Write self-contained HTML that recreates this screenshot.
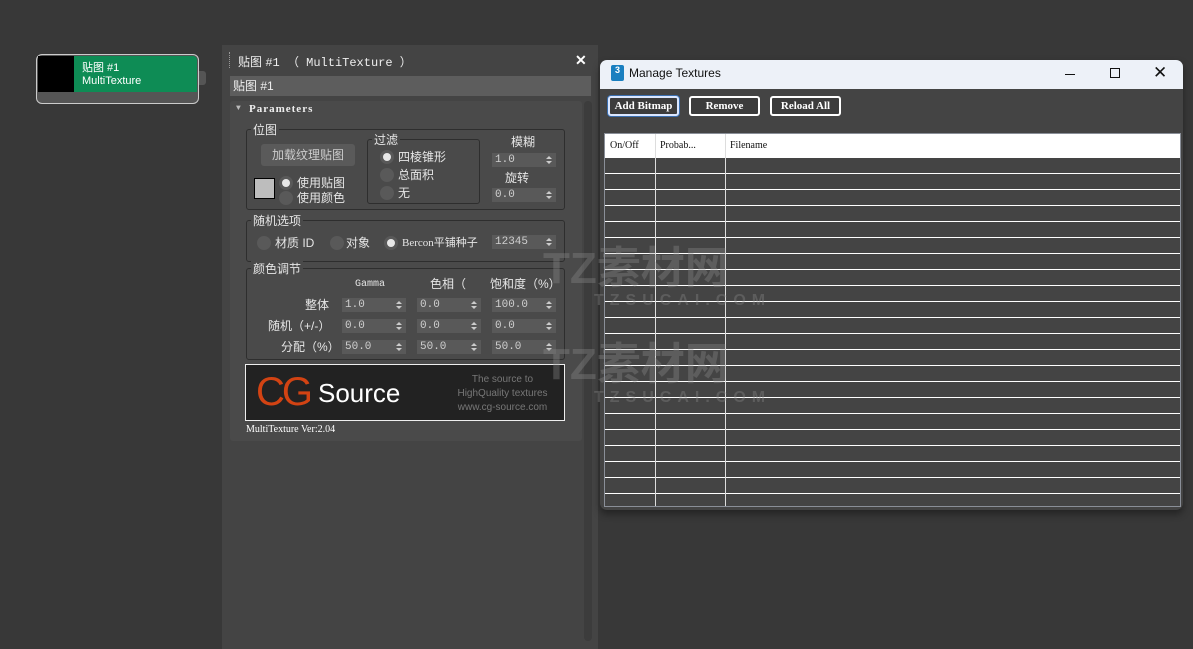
<!DOCTYPE html>
<html><head><meta charset="utf-8">
<style>
*{margin:0;padding:0;box-sizing:border-box}
body{width:1193px;height:649px;overflow:hidden;background:#383838;font-family:"Liberation Mono","Noto Sans CJK SC",monospace;color:#ddd;position:relative;font-size:11px}
.a{position:absolute}
.cj{font-family:"Liberation Sans","Noto Sans CJK SC",sans-serif}
.grp{position:absolute;border:1px solid #2e2e2e;border-radius:3px}
.gl{position:absolute;top:-9px;left:4px;background:#4a4a4a;padding:0 2px;font-size:12px;color:#e6e6e6;font-family:"Liberation Sans","Noto Sans CJK SC",sans-serif}
.sp{position:absolute;height:14px;width:64px;background:#595959;color:#cfcfcf;font-size:11px;line-height:14px;padding-left:3px}
.sp:after{content:"";position:absolute;right:4px;top:3px;border-left:3px solid transparent;border-right:3px solid transparent;border-bottom:3px solid #ccc}
.sp:before{content:"";position:absolute;right:4px;bottom:3px;border-left:3px solid transparent;border-right:3px solid transparent;border-top:3px solid #ccc}
.rd{position:absolute;width:14px;height:14px;border-radius:50%;background:#595959}
.rd.on:after{content:"";position:absolute;left:3px;top:3px;width:8px;height:8px;border-radius:50%;background:#e8e8e8}
.lb{position:absolute;font-size:12px;color:#e6e6e6;font-family:"Liberation Sans","Noto Sans CJK SC",sans-serif;line-height:14px;white-space:nowrap}
.btn{position:absolute;height:20px;border:2px solid #fff;border-radius:3px;background:#3c3c3c;color:#fff;font-size:11px;text-align:center;line-height:16px;font-family:"Liberation Serif",serif;font-weight:bold}
.wm{position:absolute;color:rgba(140,140,140,.35);font-family:"Liberation Sans","Noto Sans CJK SC",sans-serif;font-weight:bold;white-space:nowrap}
</style></head><body>

<!-- node -->
<div class="a" style="left:36px;top:54px;width:163px;height:50px;border:1px solid #ccc;border-radius:6px;background:#555"></div>
<div class="a" style="left:38px;top:56px;width:36px;height:36px;background:#000"></div>
<div class="a" style="left:74px;top:56px;width:123px;height:36px;background:#0e8c55;border-radius:0 4px 0 0"></div>
<div class="a cj" style="left:82px;top:59px;font-size:11px;color:#fff">贴图 #1</div>
<div class="a cj" style="left:82px;top:75px;font-size:11px;color:#fff">MultiTexture</div>
<div class="a" style="left:199px;top:71px;width:7px;height:14px;background:#555;border-radius:0 3px 3px 0"></div>

<!-- material panel -->
<div class="a" style="left:222px;top:45px;width:376px;height:604px;background:#444"></div>
<div class="a" style="left:229px;top:52px;width:2px;height:16px;border-left:1px dotted #999"></div>
<div class="a cj" style="left:238px;top:53px;font-size:12px;color:#eee">贴图 <span style="font-family:'Liberation Mono'">#1 （ MultiTexture ）</span></div>
<div class="a" style="left:575px;top:52px;font-size:14px;color:#fff;font-weight:bold;font-family:'Liberation Sans'">✕</div>
<div class="a cj" style="left:230px;top:76px;width:361px;height:20px;background:#5d5d5d;font-size:12px;color:#eee;line-height:20px;padding-left:3px">贴图 #1</div>
<div class="a" style="left:230px;top:101px;width:352px;height:340px;background:#4a4a4a;border-radius:3px"></div>
<div class="a" style="left:584px;top:101px;width:8px;height:540px;background:#3c3c3c;border-radius:4px"></div>
<div class="a" style="left:236px;top:104px;font-size:8px;color:#bbb">▼</div>
<div class="a" style="left:249px;top:103px;font-size:11px;font-weight:bold;color:#eee;font-family:'Liberation Serif';letter-spacing:1px">Parameters</div>

<div class="grp" style="left:246px;top:129px;width:319px;height:81px"><span class="gl">位图</span></div>
<div class="a cj" style="left:261px;top:144px;width:94px;height:22px;background:#5a5a5a;border-radius:3px;font-size:12px;color:#ccc;text-align:center;line-height:22px">加载纹理贴图</div>
<div class="a" style="left:254px;top:178px;width:21px;height:21px;background:#bdbdbd;border:1px solid #000"></div>
<div class="rd on" style="left:279px;top:176px"></div><div class="lb" style="left:297px;top:176px">使用贴图</div>
<div class="rd" style="left:279px;top:191px"></div><div class="lb" style="left:297px;top:191px">使用颜色</div>

<div class="grp" style="left:367px;top:139px;width:113px;height:65px"><span class="gl">过滤</span></div>
<div class="rd on" style="left:380px;top:150px"></div><div class="lb" style="left:398px;top:150px">四棱锥形</div>
<div class="rd" style="left:380px;top:168px"></div><div class="lb" style="left:398px;top:168px">总面积</div>
<div class="rd" style="left:380px;top:186px"></div><div class="lb" style="left:398px;top:186px">无</div>
<div class="lb" style="left:511px;top:135px">模糊</div>
<div class="sp" style="left:492px;top:153px">1.0</div>
<div class="lb" style="left:505px;top:171px">旋转</div>
<div class="sp" style="left:492px;top:188px">0.0</div>

<div class="grp" style="left:246px;top:220px;width:319px;height:42px"><span class="gl">随机选项</span></div>
<div class="rd" style="left:257px;top:236px"></div><div class="lb" style="left:275px;top:236px">材质 ID</div>
<div class="rd" style="left:330px;top:236px"></div><div class="lb" style="left:346px;top:236px">对象</div>
<div class="rd on" style="left:384px;top:236px"></div><div class="lb" style="left:402px;top:236px;font-size:11px"><span style="font-family:'Liberation Serif'">Bercon</span>平铺种子</div>
<div class="sp" style="left:492px;top:235px">12345</div>

<div class="grp" style="left:246px;top:268px;width:319px;height:92px"><span class="gl">颜色调节</span></div>
<div class="lb" style="left:355px;top:278px;font-size:10px;font-family:'Liberation Mono'">Gamma</div>
<div class="lb" style="left:430px;top:277px">色相（</div>
<div class="lb" style="left:490px;top:277px">饱和度（%）</div>
<div class="lb" style="left:305px;top:298px">整体</div>
<div class="lb" style="left:268px;top:319px">随机（+/-）</div>
<div class="lb" style="left:281px;top:340px">分配（%）</div>
<div class="sp" style="left:342px;top:298px">1.0</div><div class="sp" style="left:417px;top:298px">0.0</div><div class="sp" style="left:492px;top:298px">100.0</div>
<div class="sp" style="left:342px;top:319px">0.0</div><div class="sp" style="left:417px;top:319px">0.0</div><div class="sp" style="left:492px;top:319px">0.0</div>
<div class="sp" style="left:342px;top:340px">50.0</div><div class="sp" style="left:417px;top:340px">50.0</div><div class="sp" style="left:492px;top:340px">50.0</div>

<div class="a" style="left:245px;top:364px;width:320px;height:57px;background:#222;border:1px solid #eee"></div>
<div class="a" style="left:256px;top:370px;font-family:'Liberation Sans';font-size:40px;color:#d24313;letter-spacing:-3px;line-height:44px">CG</div>
<div class="a" style="left:318px;top:378px;font-family:'Liberation Sans';font-size:26px;color:#fff;line-height:30px">Source</div>
<div class="a" style="left:455px;top:373px;font-family:'Liberation Sans';font-size:10px;color:#777;line-height:14px;text-align:center;width:95px">The source to<br>HighQuality textures<br>www.cg-source.com</div>
<div class="a" style="left:246px;top:424px;font-size:10px;color:#fff;font-family:'Liberation Serif'">MultiTexture Ver:2.04</div>

<!-- manage textures window -->
<div class="a" style="left:600px;top:60px;width:583px;height:450px;background:#444;border-radius:7px;box-shadow:0 4px 8px rgba(0,0,0,.4);overflow:hidden">
 <div class="a" style="left:0;top:0;width:583px;height:29px;background:#edf1f8"></div>
 <div class="a" style="left:11px;top:5px;width:13px;height:16px;background:#1a7fc0;border-radius:2px;color:#fff;font-size:9px;text-align:center;font-family:'Liberation Sans';font-weight:bold">3</div>
 <div class="a" style="left:29px;top:6px;font-family:'Liberation Sans';font-size:12px;color:#111">Manage Textures</div>
 <div class="a" style="left:465px;top:14px;width:10px;height:1px;background:#111"></div>
 <div class="a" style="left:510px;top:8px;width:10px;height:10px;border:1px solid #111"></div>
 <div class="a" style="left:553px;top:3px;font-family:'Liberation Sans';font-size:17px;color:#111">✕</div>
 <div class="btn" style="left:8px;width:71px;top:36px;border-color:#dbe7ff;box-shadow:0 0 0 1px #3b6fb0">Add Bitmap</div>
 <div class="btn" style="left:89px;width:71px;top:36px">Remove</div>
 <div class="btn" style="left:170px;width:71px;top:36px">Reload All</div>
 <div class="a" style="left:4px;top:73px;width:577px;height:374px;border:1px solid #8a8f98;background:#444;
   background-image:repeating-linear-gradient(to bottom,transparent 0,transparent 15px,#fff 15px,#fff 16px);background-position:0 24px"></div>
 <div class="a" style="left:5px;top:74px;width:575px;height:24px;background:#fff;color:#111;font-size:10px;line-height:24px;font-family:'Liberation Serif'">
  <span class="a" style="left:5px">On/Off</span><span class="a" style="left:55px">Probab...</span><span class="a" style="left:125px">Filename</span></div>
 <div class="a" style="left:55px;top:74px;width:1px;height:372px;background:#ddd"></div>
 <div class="a" style="left:125px;top:74px;width:1px;height:372px;background:#ddd"></div>
</div>

<!-- watermark -->
<div class="wm" style="left:543px;top:232px;font-size:44px">TZ素材网</div>
<div class="wm" style="left:594px;top:292px;font-size:16px;letter-spacing:6px">TZSUCAI.COM</div>
<div class="wm" style="left:543px;top:328px;font-size:44px">TZ素材网</div>
<div class="wm" style="left:594px;top:389px;font-size:16px;letter-spacing:6px">TZSUCAI.COM</div>
</body></html>
